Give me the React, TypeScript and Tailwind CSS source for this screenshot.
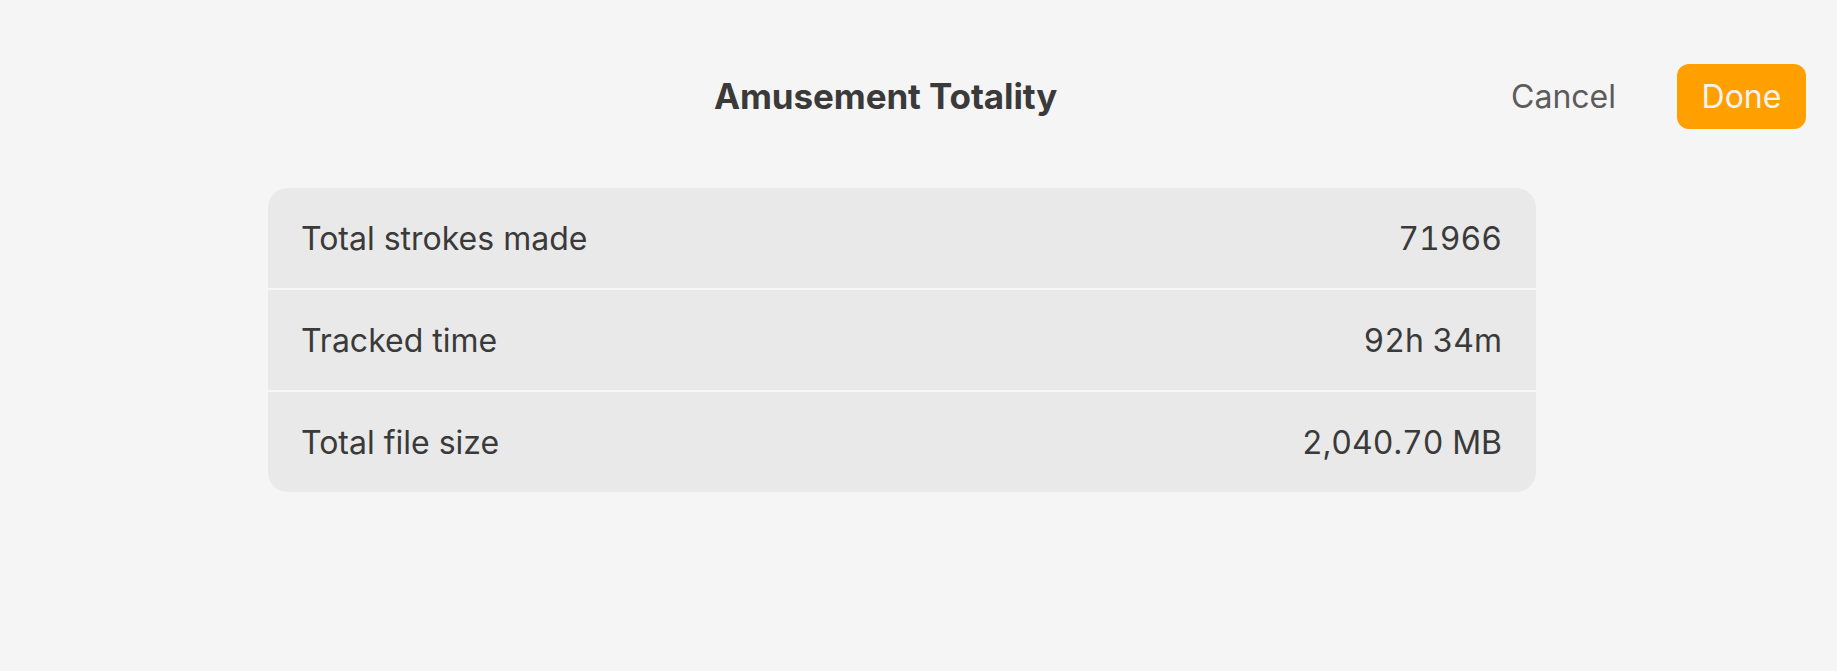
const stats = [
  { label: "Total strokes made", value: "71966" },
  { label: "Tracked time", value: "92h 34m" },
  { label: "Total file size", value: "2,040.70 MB" },
];

function App() {
  return (
    <div className="w-full h-[671px] bg-[#f5f5f5] font-['Inter',_'Liberation_Sans',_sans-serif] text-[#3a3a3a]">
      <header className="flex items-center pt-[64px] pr-[31px]">
        <h1 className="ml-[714px] text-[35px] font-bold tracking-[-0.1px] text-[#3a3a3a]">Amusement Totality</h1>
        <div className="ml-auto flex items-center gap-[61px]">
          <button className="text-[32px] text-[#5c5c5c]">Cancel</button>
          <button className="w-[129px] h-[65px] rounded-[12px] bg-[#ffa000] text-[32px] text-[#f3f3f3]">Done</button>
        </div>
      </header>

      <div className="ml-[268px] mt-[59px] w-[1268px] rounded-[20px] bg-[#e9e9e9] overflow-hidden">
        {stats.map((s, i) => (
          <div
            key={s.label}
            className={
              "flex items-center justify-between pl-[33px] pr-[34px] text-[32px] " +
              (i > 0 ? "h-[102px] border-t-2 border-[#f7f7f7] pt-[2px]" : "h-[100px] pt-[2px]")
            }
          >
            <span>{s.label}</span>
            <span className="tabular-nums">{s.value}</span>
          </div>
        ))}
      </div>
    </div>
  );
}

export default App;
